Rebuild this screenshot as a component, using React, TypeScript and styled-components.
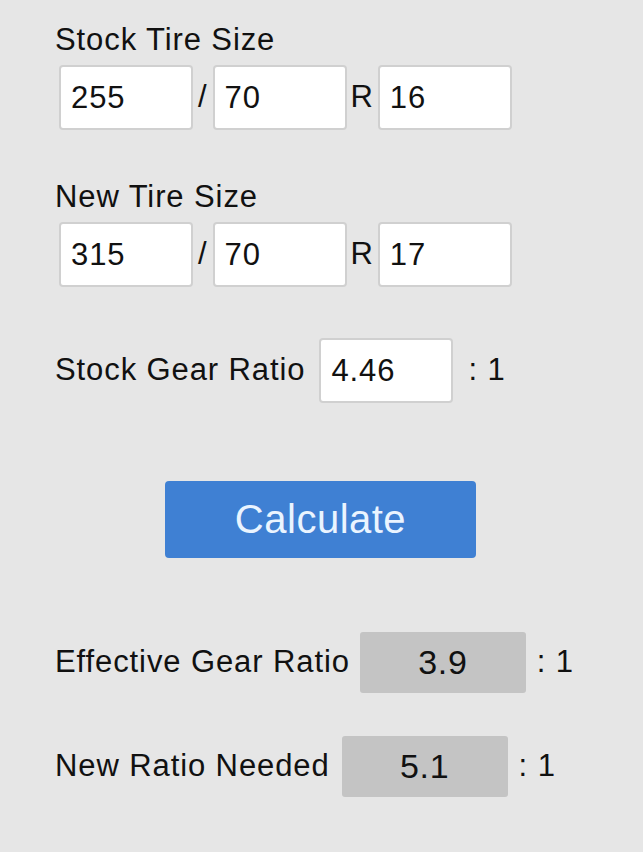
import React, { useState } from "react";
import styled, { createGlobalStyle } from "styled-components";

const GlobalStyle = createGlobalStyle`
  html, body {
    margin: 0;
    padding: 0;
    background: #e6e6e6;
  }
  body {
    font-family: "Liberation Sans", Arial, Helvetica, sans-serif;
    color: #111;
  }
`;

const Page = styled.div`
  width: 643px;
  min-height: 852px;
  box-sizing: border-box;
  padding: 23px 0 0 55px;
  background: #e6e6e6;
  display: flex;
  flex-direction: column;
  font-size: 31px;
  letter-spacing: 0.9px;
  line-height: 34.5px;
`;

const Label = styled.div<{ top?: number }>`
  margin-top: ${({ top }) => top ?? 0}px;
`;

const SizeRow = styled.div`
  display: flex;
  align-items: center;
  margin: 7.5px 0 0 4px;
`;

const Field = styled.input`
  width: 134px;
  height: 65px;
  box-sizing: border-box;
  border: 2px solid #d0d0d0;
  border-radius: 4px;
  background: #fff;
  padding: 0 0 0 10px;
  margin: 0;
  font-family: inherit;
  font-size: 31px;
  letter-spacing: 0.9px;
  color: #111;
  outline: none;
`;

const Sep = styled.span<{ gap: number }>`
  padding: 0 ${({ gap }) => gap}px;
`;

const RatioRow = styled.div<{ top: number; height: number }>`
  display: flex;
  align-items: center;
  height: ${({ height }) => height}px;
  margin-top: ${({ top }) => top}px;
`;

const RatioLabel = styled.span<{ gap: number }>`
  margin-right: ${({ gap }) => gap}px;
`;

const Suffix = styled.span<{ gap: number }>`
  margin-left: ${({ gap }) => gap}px;
`;

const CalcButton = styled.button`
  align-self: center;
  margin: 78px 0 0 -57px;
  width: 311px;
  height: 77px;
  border: none;
  border-radius: 4px;
  background: #3f80d3;
  color: #eaf4ff;
  font-family: inherit;
  font-size: 40px;
  letter-spacing: 0.5px;
  cursor: pointer;
`;

const Result = styled.div`
  width: 166px;
  height: 61px;
  border-radius: 3px;
  background: #c4c4c4;
  display: flex;
  align-items: center;
  justify-content: center;
  font-size: 34px;
  letter-spacing: 0.7px;
`;

type TireSize = { width: string; ratio: string; rim: string };

function TireInputs({ size, onChange }: { size: TireSize; onChange: (s: TireSize) => void }) {
  return (
    <SizeRow>
      <Field value={size.width} onChange={(e) => onChange({ ...size, width: e.target.value })} />
      <Sep gap={5}>/</Sep>
      <Field value={size.ratio} onChange={(e) => onChange({ ...size, ratio: e.target.value })} />
      <Sep gap={4}>R</Sep>
      <Field value={size.rim} onChange={(e) => onChange({ ...size, rim: e.target.value })} />
    </SizeRow>
  );
}

function diameter(s: TireSize) {
  return (parseFloat(s.width) * parseFloat(s.ratio) * 2) / 100 / 25.4 + parseFloat(s.rim);
}

export default function App() {
  const [stock, setStock] = useState<TireSize>({ width: "255", ratio: "70", rim: "16" });
  const [fresh, setFresh] = useState<TireSize>({ width: "315", ratio: "70", rim: "17" });
  const [gear, setGear] = useState("4.46");
  const [results, setResults] = useState({ effective: "3.9", needed: "5.1" });

  const calculate = () => {
    const d1 = diameter(stock);
    const d2 = diameter(fresh);
    const g = parseFloat(gear);
    if (!d1 || !d2 || !g) return;
    setResults({
      effective: ((g * d1) / d2).toFixed(1),
      needed: ((g * d2) / d1).toFixed(1),
    });
  };

  return (
    <>
      <GlobalStyle />
      <Page>
        <Label>Stock Tire Size</Label>
        <TireInputs size={stock} onChange={setStock} />

        <Label top={50}>New Tire Size</Label>
        <TireInputs size={fresh} onChange={setFresh} />

        <RatioRow top={51} height={65}>
          <RatioLabel gap={14}>Stock Gear Ratio</RatioLabel>
          <Field value={gear} onChange={(e) => setGear(e.target.value)} />
          <Suffix gap={15}>: 1</Suffix>
        </RatioRow>

        <CalcButton onClick={calculate}>Calculate</CalcButton>

        <RatioRow top={74} height={61}>
          <RatioLabel gap={10}>Effective Gear Ratio</RatioLabel>
          <Result>{results.effective}</Result>
          <Suffix gap={11}>: 1</Suffix>
        </RatioRow>

        <RatioRow top={42} height={62}>
          <RatioLabel gap={12}>New Ratio Needed</RatioLabel>
          <Result>{results.needed}</Result>
          <Suffix gap={11}>: 1</Suffix>
        </RatioRow>
      </Page>
    </>
  );
}
